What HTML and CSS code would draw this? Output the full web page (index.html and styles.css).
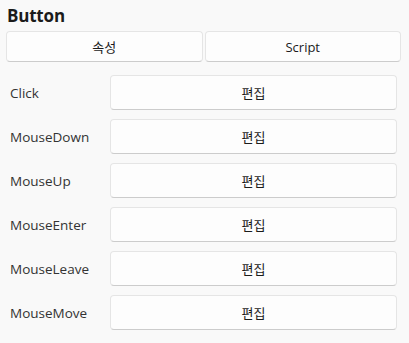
FILE: index.html
```html
<!DOCTYPE html>
<html>
<head>
	<title>Button</title>
	<link rel="stylesheet" href="styles.css">
</head>
<body>
	<div class="panel">
		<div class="title">Button</div>
		<div class="tabs">
			<div class="tab-button">속성</div>
			<div class="tab-button">Script</div>
		</div>
		<div class="events">
			<div class="event-row">
				<div class="event-name">Click</div>
				<div class="edit-button">편집</div>
			</div>
			<div class="event-row">
				<div class="event-name">MouseDown</div>
				<div class="edit-button">편집</div>
			</div>
			<div class="event-row">
				<div class="event-name">MouseUp</div>
				<div class="edit-button">편집</div>
			</div>
			<div class="event-row">
				<div class="event-name">MouseEnter</div>
				<div class="edit-button">편집</div>
			</div>
			<div class="event-row">
				<div class="event-name">MouseLeave</div>
				<div class="edit-button">편집</div>
			</div>
			<div class="event-row">
				<div class="event-name">MouseMove</div>
				<div class="edit-button">편집</div>
			</div>
		</div>
	</div>
</body>
</html>
```
FILE: styles.css
```css
* {
	box-sizing: border-box;
}
body {
	margin: 0;
	background-color: #f9f9f9;
	font-family: "Open Sans", "Noto Sans CJK KR", sans-serif;
	color: #1b1b1b;
}
.panel {
	padding: 3px 8px 0 6px;
}
.title {
	height: 28px;
	line-height: 26px;
	padding-left: 1px;
	font-size: 17px;
	font-weight: bold;
	letter-spacing: -0.2px;
	color: #1b1b1b;
}
.tabs {
	display: flex;
	gap: 2px;
}
.tab-button, .edit-button {
	display: flex;
	justify-content: center;
	align-items: center;
	background-color: #fdfdfd;
	border: 1px solid #e5e5e5;
	border-bottom-color: #cccccc;
	border-radius: 4px;
	font-size: 13px;
	color: #1b1b1b;
	cursor: pointer;
}
.tab-button {
	flex: 1;
	height: 31px;
}
.tab-button:hover, .edit-button:hover {
	background-color: #f6f6f6;
}
.events {
	display: flex;
	flex-direction: column;
	gap: 9px;
	margin-top: 13px;
	padding-right: 4px;
}
.event-row {
	display: flex;
	align-items: center;
}
.event-name {
	width: 104px;
	padding-left: 4px;
	font-size: 13.5px;
	color: #333;
}
.edit-button {
	flex: 1;
	height: 35px;
}
```
